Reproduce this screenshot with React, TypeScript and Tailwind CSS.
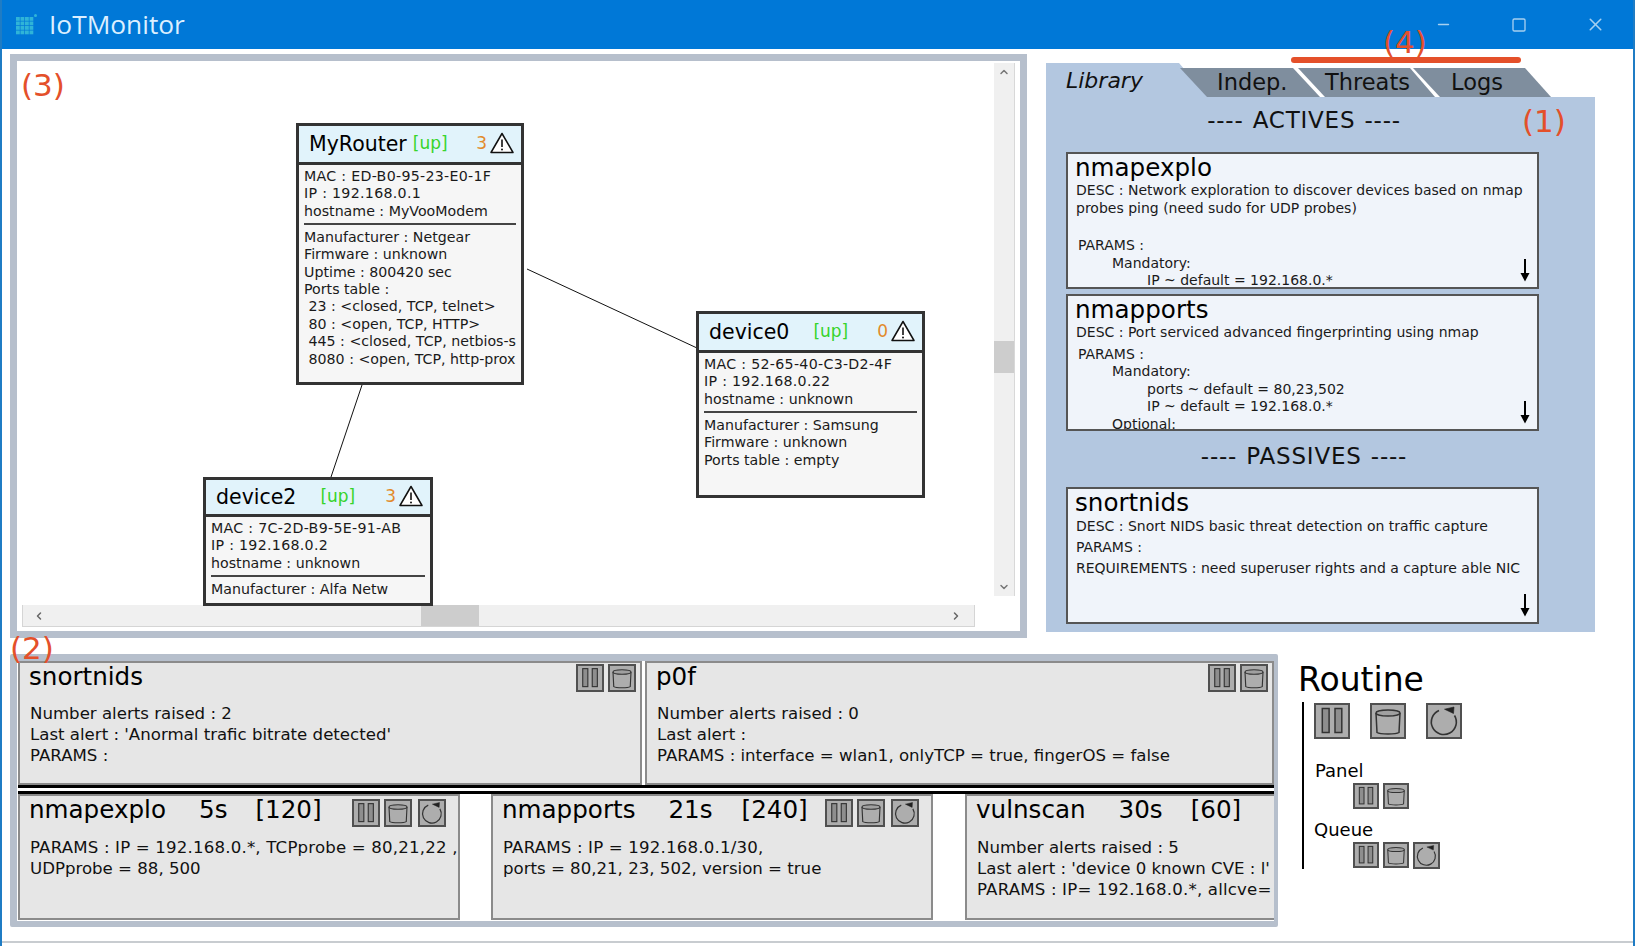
import { ChevronDown, ChevronLeft, ChevronRight, ChevronUp, Minus, Square, X } from 'lucide-react'

type Kind = 'pause' | 'clear' | 'restart'

function CtrlIcon({ kind }: { kind: Kind }) {
  return (
    <svg viewBox="0 0 32 32" className="w-full h-full" fill="none" stroke="#333" strokeWidth="1.500">
      {kind === 'pause' && (
        <>
          <rect x="6.300" y="3.500" width="6.800" height="24" fill="#8e8e8e" />
          <rect x="19" y="3.500" width="6.800" height="24" fill="#8e8e8e" />
        </>
      )}
      {kind === 'clear' && (
        <>
          <path d="M4 8L5 27.500C8 29.500 24 29.500 27 27.500L28 8" />
          <ellipse cx="16" cy="8" rx="12" ry="3" fill="#a0a0a0" />
        </>
      )}
      {kind === 'restart' && (
        <>
          <path d="M26.500 10.500A12.500 12.500 0 1 1 11 5.500" strokeWidth="1.600" />
          <path d="M16.500 4.200L26 2L25.500 8.500Z" fill="#222" stroke="#222" strokeWidth="0.600" />
        </>
      )}
    </svg>
  )
}

function CtrlButton({ kind, className = '' }: { kind: Kind; className?: string }) {
  return (
    <div className={`shrink-0 border-2 border-[#505050] bg-[#adadad] ${className}`}>
      <CtrlIcon kind={kind} />
    </div>
  )
}

function Warning() {
  return (
    <svg viewBox="0 0 24 22" className="w-[24px] h-[22px] -mt-[3px]">
      <path d="M12 1.500L23 20.500H1Z" fill="#fff" stroke="#111" strokeWidth="1.500" strokeLinejoin="round" />
      <path d="M12 7.500V15" stroke="#111" strokeWidth="1.600" />
      <circle cx="12" cy="17.500" r="1" fill="#111" />
    </svg>
  )
}

function NodeHeader({ name, count, gap, height = 'h-[39px]' }: { name: string; count: number; gap: string; height?: string }) {
  return (
    <div className={`${height} shrink-0 flex items-center pl-[10px] pr-[7px] bg-[#e1f3fb] border-b-[3px] border-[#333]`}>
      <span className="text-[20.500px] text-black">{name}</span>
      <span className={`text-[17px] text-[#37d42c] ${gap}`}>[up]</span>
      <span className="ml-auto text-[17px] text-[#e28a2b]">{count}</span>
      <span className="ml-[3px]">
        <Warning />
      </span>
    </div>
  )
}

function NodeBody({ first, rest }: { first: string[]; rest: string[] }) {
  return (
    <div className="flex-1 overflow-hidden whitespace-pre text-[14.200px] leading-[17.400px] text-[#1a1a1a] px-[5px] pt-[3px]">
      <div>
        {first.map((l) => (
          <div key={l} className={l.startsWith('hostname') ? '' : 'tracking-[0.300px]'}>
            {l}
          </div>
        ))}
      </div>
      <div className="h-[1.500px] bg-[#444] mt-[3px] mb-[4px]" />
      <div>
        {rest.map((l) => (
          <div key={l}>{l}</div>
        ))}
      </div>
    </div>
  )
}

function GraphPanel() {
  return (
    <div className="w-[1017px] h-[584px] shrink-0 border-[7px] border-[#b6bfcc] bg-white flex flex-col">
      <div className="flex-1 flex min-h-0">
        <div className="relative flex-1">
          {/* graph canvas, coordinates are relative to the panel inner box */}
          <svg className="absolute inset-0 w-full h-full" fill="none" stroke="#111" strokeWidth="1">
            <path d="M510 208L680 287" />
            <path d="M345 324L314 416" />
          </svg>
          <div className="absolute left-[279px] top-[62px] w-[228px] h-[262px] flex flex-col border-[3px] border-[#333] bg-[#f6f6f6]">
            <NodeHeader name="MyRouter" count={3} gap="ml-[6px]" />
            <NodeBody
              first={['MAC : ED-B0-95-23-E0-1F', 'IP : 192.168.0.1', 'hostname : MyVooModem']}
              rest={[
                'Manufacturer : Netgear',
                'Firmware : unknown',
                'Uptime : 800420 sec',
                'Ports table :',
                ' 23 : <closed, TCP, telnet>',
                ' 80 : <open, TCP, HTTP>',
                ' 445 : <closed, TCP, netbios-s',
                ' 8080 : <open, TCP, http-prox',
              ]}
            />
          </div>
          <div className="absolute left-[679px] top-[250px] w-[229px] h-[187px] flex flex-col border-[3px] border-[#333] bg-[#f6f6f6]">
            <NodeHeader name="device0" count={0} gap="ml-[24px]" />
            <NodeBody
              first={['MAC : 52-65-40-C3-D2-4F', 'IP : 192.168.0.22', 'hostname : unknown']}
              rest={['Manufacturer : Samsung', 'Firmware : unknown', 'Ports table : empty']}
            />
          </div>
          <div className="absolute left-[186px] top-[416px] w-[230px] h-[129px] flex flex-col border-[3px] border-[#333] bg-[#f6f6f6]">
            <NodeHeader name="device2" count={3} gap="ml-[24px]" height="h-[37px]" />
            <NodeBody
              first={['MAC : 7C-2D-B9-5E-91-AB', 'IP : 192.168.0.2', 'hostname : unknown']}
              rest={['Manufacturer : Alfa Netw']}
            />
          </div>
          <div className="absolute left-[4px] top-[9px] text-[31px] leading-none text-[#e4502a]">(3)</div>
        </div>
        <div className="w-[21px] shrink-0 mt-[2px] mr-[5px] mb-[9px] bg-[#f0f0f0] border-r border-[#d8d8d8] flex flex-col items-center text-[#777]">
          <div className="h-[18px] flex items-center">
            <ChevronUp className="w-[12px] h-[12px]" strokeWidth={3} />
          </div>
          <div className="h-[260px]" />
          <div className="w-full h-[32px] bg-[#cdcdcd]" />
          <div className="flex-1" />
          <div className="h-[18px] flex items-center">
            <ChevronDown className="w-[12px] h-[12px]" strokeWidth={3} />
          </div>
        </div>
      </div>
      <div className="h-[22px] shrink-0 mb-[4px] ml-[5px] w-[953px] flex items-center bg-[#f0f0f0] border-b border-r border-[#d5d5d5] border-l text-[#666]">
        <div className="w-[398px] pl-[10px]">
          <ChevronLeft className="w-[12px] h-[12px]" strokeWidth={3} />
        </div>
        <div className="w-[58px] h-full bg-[#cdcdcd]" />
        <div className="flex-1 flex justify-end pr-[12px]">
          <ChevronRight className="w-[12px] h-[12px]" strokeWidth={3} />
        </div>
      </div>
    </div>
  )
}

function LibTab({ label, className }: { label: string; className: string }) {
  return (
    <div className={`h-[29px] flex items-center text-[22.500px] text-[#111] bg-[#7f8e9e] ${className}`}>
      {label}
    </div>
  )
}

function LibCard({ title, children }: { title: string; children: React.ReactNode }) {
  return (
    <div className="relative h-[137px] w-[473px] overflow-hidden border-2 border-[#555] bg-[#f0f4fa] pl-[8px] text-[14px] leading-[17.500px] text-[#1a1a1a] whitespace-pre">
      <div className="text-[24.600px] leading-[26px] pt-[1px] pb-[1px] -ml-[1px] text-black">{title}</div>
      {children}
      <svg viewBox="0 0 12 23" className="absolute right-[6px] bottom-[5px] w-[12px] h-[23px]">
        <path d="M6 0V16" stroke="#000" strokeWidth="2" />
        <path d="M1.500 14H10.500L6 22.500Z" fill="#000" />
      </svg>
    </div>
  )
}

function SectionTitle({ label, className }: { label: string; className: string }) {
  return (
    <div className={`w-[473px] pl-[3px] text-center text-[23px] tracking-[0.800px] [word-spacing:1px] text-[#111] ${className}`}>
      {label}
    </div>
  )
}

function LibraryPanel() {
  return (
    <div className="w-[549px] h-[569px] shrink-0 mt-[9px] ml-[19px] flex flex-col">
      <div className="flex items-end h-[34px] shrink-0">
        <div className="w-[162px] h-[34px] bg-[#b3c7e0] [clip-path:polygon(0_0,133px_0,100%_100%,0_100%)] italic text-[22px] text-[#111] pl-[20px] leading-[36px]">
          Library
        </div>
        <LibTab label="Indep." className="w-[140px] -ml-[28px] pl-[37px] [clip-path:polygon(0_0,113px_0,100%_100%,27px_100%)]" />
        <LibTab label="Threats" className="w-[137px] -ml-[22px] pl-[27px] [clip-path:polygon(0_0,112px_0,100%_100%,27px_100%)]" />
        <LibTab label="Logs" className="w-[138px] -ml-[22px] pl-[38px] [clip-path:polygon(0_0,112px_0,100%_100%,27px_100%)]" />
      </div>
      <div className="flex-1 bg-[#b3c7e0] pl-[20px] flex flex-col">
        <SectionTitle label="---- ACTIVES ----" className="h-[55px] leading-[46px]" />
        <LibCard title="nmapexplo">
          <div>DESC : Network exploration to discover devices based on nmap</div>
          <div>probes ping (need sudo for UDP probes)</div>
          <div className="mt-[20px] pl-[2px]">PARAMS :</div>
          <div className="pl-[36px]">Mandatory:</div>
          <div className="pl-[71px]">IP ~ default = 192.168.0.*</div>
        </LibCard>
        <div className="h-[5px]" />
        <LibCard title="nmapports">
          <div>DESC : Port serviced advanced fingerprinting using nmap</div>
          <div className="mt-[4px] pl-[2px]">PARAMS :</div>
          <div className="pl-[36px]">Mandatory:</div>
          <div className="pl-[71px]">ports ~ default = 80,23,502</div>
          <div className="pl-[71px]">IP ~ default = 192.168.0.*</div>
          <div className="pl-[36px]">Optional:</div>
        </LibCard>
        <SectionTitle label="---- PASSIVES ----" className="h-[56px] leading-[50px]" />
        <LibCard title="snortnids">
          <div className="mt-[1px]">DESC : Snort NIDS basic threat detection on traffic capture</div>
          <div className="mt-[3px]">PARAMS :</div>
          <div className="mt-[4px]">REQUIREMENTS : need superuser rights and a capture able NIC</div>
        </LibCard>
      </div>
    </div>
  )
}

function Tile({
  title,
  lines,
  kinds,
  className,
  spacer,
}: {
  title: React.ReactNode
  lines: string[]
  kinds: Kind[]
  className: string
  spacer: string
}) {
  const queued = kinds.length === 3
  return (
    <div className={`shrink-0 overflow-hidden border-2 border-[#8b8b8b] bg-[#e6e6e6] whitespace-pre text-[#111] ${className}`}>
      <div className="flex items-start pl-[9px] pr-[4px] h-[36px]">
        <div className="text-[24.600px] leading-[28px] text-black">{title}</div>
        <div className={`flex gap-[4px] ${queued ? 'pt-[3px]' : 'pt-[1px]'} ${spacer}`}>
          {kinds.map((k) => (
            <CtrlButton key={k} kind={k} className={`w-[28px] h-[28px] ${k === 'restart' ? 'ml-[2px]' : ''}`} />
          ))}
        </div>
      </div>
      <div className={`pl-[10px] text-[16.600px] leading-[21px] ${queued ? 'pt-[5px]' : 'pt-[4px]'}`}>
        {lines.map((l) => (
          <div key={l} className={l.includes('192.') ? 'tracking-[0.180px]' : ''}>
            {l}
          </div>
        ))}
      </div>
    </div>
  )
}

function JobTitle({ name, time, size, sizeGap }: { name: string; time: string; size: string; sizeGap: string }) {
  return (
    <>
      {name}
      <span className="ml-[33px]">{time}</span>
      <span className={sizeGap}>{size}</span>
    </>
  )
}

function QueuePanel() {
  return (
    <div className="w-[1268px] h-[273px] shrink-0 border-[7px] border-r-[4px] border-b-[6px] border-[#b6bfcc] rounded-[2px] bg-white pl-[1px]">
      <div className="flex gap-[3px] h-[124px]">
        <Tile
          title="snortnids"
          className="w-[624px]"
          spacer="ml-auto"
          kinds={['pause', 'clear']}
          lines={['Number alerts raised : 2', "Last alert : 'Anormal trafic bitrate detected'", 'PARAMS :']}
        />
        <Tile
          title="p0f"
          className="flex-1"
          spacer="ml-auto"
          kinds={['pause', 'clear']}
          lines={['Number alerts raised : 0', 'Last alert :', 'PARAMS : interface = wlan1, onlyTCP = true, fingerOS = false']}
        />
      </div>
      <div className="h-[9px] border-y-[3px] border-black" />
      <div className="flex h-[126px]">
        <Tile
          title={<JobTitle name="nmapexplo" time="5s" size="[120]" sizeGap="ml-[28px]" />}
          className="w-[442px] h-[126px]"
          spacer="ml-[30px]"
          kinds={['pause', 'clear', 'restart']}
          lines={['PARAMS : IP = 192.168.0.*, TCPprobe = 80,21,22 ,', 'UDPprobe = 88, 500']}
        />
        <Tile
          title={<JobTitle name="nmapports" time="21s" size="[240]" sizeGap="ml-[29px]" />}
          className="w-[442px] h-[126px] ml-[31px]"
          spacer="ml-[17px]"
          kinds={['pause', 'clear', 'restart']}
          lines={['PARAMS : IP = 192.168.0.1/30,', 'ports = 80,21, 23, 502, version = true']}
        />
        <Tile
          title={<JobTitle name="vulnscan" time="30s" size="[60]" sizeGap="ml-[28px]" />}
          className="flex-1 h-[126px] ml-[32px] border-r-0"
          spacer="hidden"
          kinds={['pause', 'clear', 'restart']}
          lines={['Number alerts raised : 5', "Last alert : 'device 0 known CVE : l'", 'PARAMS : IP= 192.168.0.*, allcve=']}
        />
      </div>
    </div>
  )
}

function RoutinePanel() {
  return (
    <div className="ml-[20px] mt-[4px] text-black">
      <div className="text-[33px] leading-[44px]">Routine</div>
      <div className="ml-[4px] h-[167px] border-l-2 border-black pl-[10px] pt-[1px]">
        <div className="flex gap-[20px]">
          <CtrlButton kind="pause" className="w-[36px] h-[36px]" />
          <CtrlButton kind="clear" className="w-[36px] h-[36px]" />
          <CtrlButton kind="restart" className="w-[36px] h-[36px]" />
        </div>
        <div className="text-[18px] leading-[24px] mt-[20px] ml-[1px]">Panel</div>
        <div className="flex gap-[4px] ml-[39px]">
          <CtrlButton kind="pause" className="w-[26px] h-[26px]" />
          <CtrlButton kind="clear" className="w-[26px] h-[26px]" />
        </div>
        <div className="text-[18px] leading-[24px] mt-[9px]">Queue</div>
        <div className="flex gap-[4px] ml-[39px]">
          <CtrlButton kind="pause" className="w-[26px] h-[26px]" />
          <CtrlButton kind="clear" className="w-[26px] h-[26px]" />
          <CtrlButton kind="restart" className="w-[27px] h-[27px]" />
        </div>
      </div>
    </div>
  )
}

function AppIcon() {
  const cells = []
  for (let r = 0; r < 4; r++) {
    for (let c = 0; c < 4; c++) {
      cells.push(<rect key={`${r}-${c}`} x={c * 4.500} y={3 + r * 4.500} width="3.800" height="3.800" fill="#2fb4d8" />)
    }
  }
  return (
    <svg viewBox="0 0 21 22" className="w-[21px] h-[22px]">
      {cells}
      <circle cx="19.500" cy="1.500" r="1.500" fill="#2fb4d8" />
    </svg>
  )
}

export default function App() {
  return (
    <div className="relative w-[1635px] h-[946px] overflow-hidden bg-white border-x-2 border-[#1f7cc4] font-['DejaVu_Sans',sans-serif]">
      <div className="h-[49px] bg-[#0078d7] flex items-center pl-[14px] text-[#dcefff]">
        <AppIcon />
        <span className="ml-[12px] text-[26.300px] font-['Open_Sans',sans-serif]">IoTMonitor</span>
        <div className="ml-auto flex items-center text-[#a6d0f0]">
          <Minus className="w-[17px] h-[17px] mr-[59px]" strokeWidth={2} />
          <Square className="w-[16px] h-[16px] mr-[58px]" strokeWidth={2} />
          <X className="w-[21px] h-[21px] mr-[27px]" strokeWidth={1.800} />
        </div>
      </div>
      <div className="flex pl-[8px] mt-[5px]">
        <GraphPanel />
        <LibraryPanel />
      </div>
      <div className="flex pl-[8px] mt-[16px]">
        <QueuePanel />
        <RoutinePanel />
      </div>
      <div className="absolute left-0 right-0 top-[941px] h-[2px] bg-[#c8ccd0]" />

      {/* annotations drawn over the capture */}
      <div className="absolute left-[1381px] top-[27px] text-[31px] leading-none text-[#e4502a]">(4)</div>
      <div className="absolute left-[1289px] top-[57px] w-[230px] h-[6px] rounded-full bg-[#e4502a]" />
      <div className="absolute left-[1520px] top-[106px] text-[31px] leading-none text-[#e4502a]">(1)</div>
      <div className="absolute left-[8px] top-[633px] text-[31px] leading-none text-[#e4502a]">(2)</div>
    </div>
  )
}
